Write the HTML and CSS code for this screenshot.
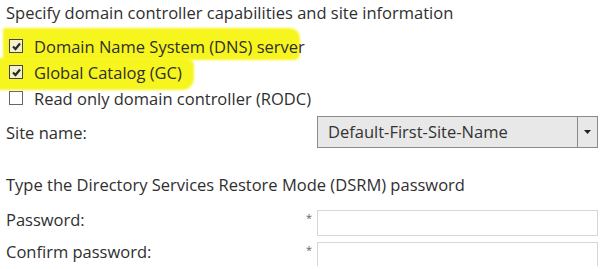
FILE: index.html
```html
<!DOCTYPE html>
<html lang="en">
<head>
  <meta charset="UTF-8">
  <title>Domain Controller Options</title>
  <link rel="stylesheet" href="styles.css">
</head>
<body>
  <div class="page">
    <p class="heading">Specify domain controller capabilities and site information</p>

    <div class="checks">
      <label class="check hl hl-dns">
        <span class="box">
          <svg width="11" height="11" viewBox="0 0 11 11"><path d="M2 5.5 L4.5 8 L9 2.5" fill="none" stroke="#2a2a2a" stroke-width="2.2"/></svg>
        </span>
        Domain Name System (DNS) server
      </label>
      <label class="check hl hl-gc">
        <span class="box">
          <svg width="11" height="11" viewBox="0 0 11 11"><path d="M2 5.5 L4.5 8 L9 2.5" fill="none" stroke="#2a2a2a" stroke-width="2.2"/></svg>
        </span>
        Global Catalog (GC)
      </label>
      <label class="check">
        <span class="box"></span>
        Read only domain controller (RODC)
      </label>
    </div>

    <div class="field site">
      <span class="label">Site name:</span>
      <span class="req"></span>
      <div class="select">
        <span class="value">Default-First-Site-Name</span>
        <span class="arrow">
          <svg width="7" height="4" viewBox="0 0 7 4"><path d="M0 0 H7 L3.5 4 Z" fill="#222"/></svg>
        </span>
      </div>
    </div>

    <p class="heading dsrm">Type the Directory Services Restore Mode (DSRM) password</p>

    <div class="field">
      <span class="label">Password:</span>
      <span class="req">*</span>
      <div class="input"></div>
    </div>
    <div class="field">
      <span class="label">Confirm password:</span>
      <span class="req">*</span>
      <div class="input"></div>
    </div>
  </div>
</body>
</html>
```

FILE: styles.css
```css
body { margin: 0; background: #fff; font-family: "Open Sans", "Noto Sans", sans-serif; font-size: 16.5px; color: #2f2f2f; }
.page { padding: 2px 0 0 6px; }
.heading { margin: 0; height: 22px; line-height: 22px; }

.checks { display: flex; flex-direction: column; margin-top: 9px; position: relative; z-index: 0; }
.check { display: flex; align-items: center; gap: 11px; height: 26px; padding-left: 3px; width: fit-content; position: relative; }
.hl::before { content: ""; position: absolute; z-index: -1; background: #f7f51e; filter: blur(1px); }
.hl-dns::before { left: -3px; right: 5px; top: -5px; bottom: -1px; border-radius: 2px 10px 6px 3px; }
.hl-gc::before { left: -8px; right: -12px; top: -1px; bottom: -5px; border-radius: 0 8px 12px 0; }
.box { width: 12px; height: 12px; border: 1px solid #666; background: #fff; display: flex; align-items: center; justify-content: center; }
.hl .box { border-color: #444; background: #f3f1cc; }

.field { display: grid; grid-template-columns: 300px 11px 281px; align-items: center; height: 32px; }
.site { margin-top: 5px; }
.req { font-size: 11px; color: #666; align-self: start; padding-top: 8px; }
.select { display: flex; height: 30px; border: 1px solid #8a8a8a; background: #e8e8e8; }
.value { flex: 1; padding-left: 10px; line-height: 30px; color: #333; }
.arrow { width: 19px; border-left: 1px solid #8a8a8a; display: flex; align-items: center; justify-content: center; }

.dsrm { margin-top: 26px; margin-bottom: 6px; }
.input { align-self: start; margin-top: 8px; height: 24px; border: 1px solid #d6d6d6; background: #fff; }
```
